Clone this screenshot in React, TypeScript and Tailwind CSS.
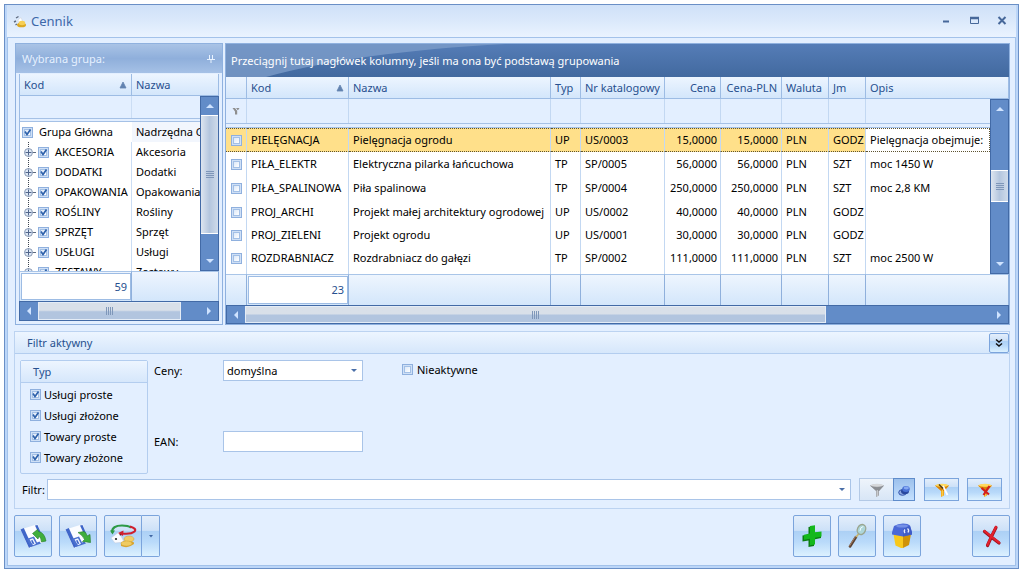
import { type ReactNode } from 'react';

const groups = [
  { kod: 'AKCESORIA', nazwa: 'Akcesoria' },
  { kod: 'DODATKI', nazwa: 'Dodatki' },
  { kod: 'OPAKOWANIA', nazwa: 'Opakowania' },
  { kod: 'ROŚLINY', nazwa: 'Rośliny' },
  { kod: 'SPRZĘT', nazwa: 'Sprzęt' },
  { kod: 'USŁUGI', nazwa: 'Usługi' },
  { kod: 'ZESTAWY', nazwa: 'Zestawy' },
];

const items = [
  { kod: 'PIELĘGNACJA', nazwa: 'Pielęgnacja ogrodu', typ: 'UP', nr: 'US/0003', cena: '15,0000', jm: 'GODZ', opis: 'Pielęgnacja obejmuje:' },
  { kod: 'PIŁA_ELEKTR', nazwa: 'Elektryczna pilarka łańcuchowa', typ: 'TP', nr: 'SP/0005', cena: '56,0000', jm: 'SZT', opis: 'moc 1450 W' },
  { kod: 'PIŁA_SPALINOWA', nazwa: 'Piła spalinowa', typ: 'TP', nr: 'SP/0004', cena: '250,0000', jm: 'SZT', opis: 'moc 2,8 KM' },
  { kod: 'PROJ_ARCHI', nazwa: 'Projekt małej architektury ogrodowej', typ: 'UP', nr: 'US/0002', cena: '40,0000', jm: 'GODZ', opis: '' },
  { kod: 'PROJ_ZIELENI', nazwa: 'Projekt ogrodu', typ: 'UP', nr: 'US/0001', cena: '30,0000', jm: 'GODZ', opis: '' },
  { kod: 'ROZDRABNIACZ', nazwa: 'Rozdrabniacz do gałęzi', typ: 'TP', nr: 'SP/0002', cena: '111,0000', jm: 'SZT', opis: 'moc 2500 W' },
];

const typy = ['Usługi proste', 'Usługi złożone', 'Towary proste', 'Towary złożone'];

function Check({ id, checked = false, label }: { id?: string; checked?: boolean; label?: string }) {
  return (
    <span className="relative inline-block size-[11px] shrink-0 align-middle">
      <input
        id={id}
        type="checkbox"
        defaultChecked={checked}
        aria-label={label}
        className="peer block size-[11px] appearance-none border border-[#8fb0de] bg-[#cfe0f6]"
      />
      <span className="pointer-events-none absolute inset-[2px] border border-[#a3c0e6] bg-gradient-to-br from-[#dce8f8] to-white" />
      <svg viewBox="0 0 11 11" className="pointer-events-none absolute inset-0 hidden size-[11px] peer-checked:block">
        <path d="M3 4.5 L5 7.5 L8.5 2.5" fill="none" stroke="#2f62ab" strokeWidth="1.7" />
      </svg>
    </span>
  );
}

function Arrow({ dir }: { dir: 'up' | 'down' | 'left' | 'right' }) {
  const points = {
    up: '1,7 9,7 5,3',
    down: '1,3 9,3 5,7',
    left: '7,1 7,9 3,5',
    right: '3,1 3,9 7,5',
  };
  return (
    <svg viewBox="0 0 10 10" className="size-[10px]">
      <polygon points={points[dir]} fill="#cfe3ff" />
    </svg>
  );
}

function Grip({ vertical = false }: { vertical?: boolean }) {
  return (
    <span className={vertical ? 'flex flex-col gap-px' : 'flex gap-px'}>
      {[0, 1, 2, 3].map(i => (
        <span key={i} className={vertical ? 'h-px w-2 bg-[#7f97b9]' : 'h-2 w-px bg-[#7f97b9]'} />
      ))}
    </span>
  );
}

function VScroll({ className, before, thumb }: { className: string; before: string; thumb: string }) {
  return (
    <div className={`flex flex-col border border-[#426aa6] bg-[#628cc8] ${className}`}>
      <button type="button" aria-label="W górę" className="flex h-[18px] shrink-0 items-center justify-center">
        <Arrow dir="up" />
      </button>
      <div className={before} />
      <div className={`flex shrink-0 items-center justify-center border-y border-white bg-gradient-to-r from-[#dde5ef] via-[#b4c6de] to-[#cfdbea] ${thumb}`}>
        <Grip vertical />
      </div>
      <div className="flex-1" />
      <button type="button" aria-label="W dół" className="flex h-[18px] shrink-0 items-center justify-center">
        <Arrow dir="down" />
      </button>
    </div>
  );
}

function HScroll({ className, thumb }: { className: string; thumb: string }) {
  return (
    <div className={`flex border border-[#426aa6] bg-[#628cc8] ${className}`}>
      <button type="button" aria-label="W lewo" className="flex w-[18px] shrink-0 items-center justify-center">
        <Arrow dir="left" />
      </button>
      <div className="flex flex-1">
        <div className={`flex items-center justify-center border border-[#e4ecf6] bg-gradient-to-b from-[#d9e0e9] from-45% to-[#b2c5df] to-55% ${thumb}`}>
          <Grip />
        </div>
      </div>
      <button type="button" aria-label="W prawo" className="flex w-[18px] shrink-0 items-center justify-center">
        <Arrow dir="right" />
      </button>
    </div>
  );
}

function SortMark() {
  return (
    <svg viewBox="0 0 8 8" className="size-2">
      <polygon points="1,7 7,7 4,1" fill="#6283b0" stroke="#6283b0" strokeWidth="0.8" />
    </svg>
  );
}

function TreeNode() {
  return (
    <svg viewBox="0 0 16 20" className="h-5 w-4 shrink-0" fill="none">
      <path d="M8.5 0V20" stroke="#3c4450" strokeDasharray="1 1" />
      <path d="M12 10.5H16" stroke="#5c6a80" />
      <circle cx="8.5" cy="10.5" r="4" fill="#dfe9f6" stroke="#8a9ab5" />
      <path d="M5.5 10.5H11.5M8.5 7.5V13.5" stroke="#50658a" />
    </svg>
  );
}

const th = 'border-r border-b border-[#9dbce4] border-r-[#9dbce4] bg-gradient-to-b from-[#edf5ff] to-[#d3e6fb] px-1 font-normal text-[#27508f]';
const tf = 'border-r border-[#8fb0dc] border-t border-t-[#a9c5e8] bg-gradient-to-b from-[#eef5fe] to-[#d3e6fb] p-0';

function GroupPanel() {
  return (
    <section className="ml-px w-[208px] shrink-0 border border-[#8fb1df] bg-[#e3efff]">
      <header className="flex h-[29px] items-center justify-between bg-gradient-to-b from-[#a9c3e6] via-[#8fafdb] to-[#a6c1e6] px-[6px] text-[#e6f1ff]">
        <h2>Wybrana grupa:</h2>
        <button type="button" aria-label="Przypnij">
          <svg viewBox="0 0 10 12" className="h-3 w-[10px]" fill="none" stroke="#e9f3ff">
            <path d="M3.5 2V6M6.5 2V6M1 6.5H9M5 7V10" />
          </svg>
        </button>
      </header>
      <div className="px-[3px] pt-px pb-[3px]">
        <table className="w-full table-fixed border-separate border-spacing-0 border-l border-[#9dbce4]">
          <colgroup>
            <col className="w-[112px]" />
            <col />
            <col className="w-[19px]" />
          </colgroup>
          <thead>
            <tr className="h-[22px] text-left">
              <th className={th}>
                <span className="flex items-center justify-between">Kod <SortMark /></span>
              </th>
              <th className={th} colSpan={2}>Nazwa</th>
            </tr>
          </thead>
          <tbody className="bg-white">
            <tr className="h-[22px]">
              <td className="border-r border-[#cbddf4] bg-[#e3efff]" />
              <td className="bg-[#e3efff]" />
              <td rowSpan={10} className="p-0 align-top">
                <VScroll className="h-[175px]" before="" thumb="h-[119px]" />
              </td>
            </tr>
            <tr className="h-1">
              <td colSpan={2} className="border-y border-[#a5c1e6] bg-[#e3efff] p-0" />
            </tr>
            <tr className="h-5">
              <td className="p-0">
                <span className="flex items-center gap-[6px] pl-[2px]">
                  <Check id="g-main" checked />
                  <label htmlFor="g-main">Grupa Główna</label>
                </span>
              </td>
              <td className="overflow-hidden bg-[#f2f6fd] p-0 pl-1 whitespace-nowrap">Nadrzędna G</td>
            </tr>
            {groups.map((g, i) => (
              <tr key={g.kod}>
                <td className="border-r border-[#cbddf4] p-0">
                  <span className={`flex items-start overflow-hidden ${i === 6 ? 'h-[9px]' : 'h-5'}`}>
                    <TreeNode />
                    <span className="flex h-5 shrink-0 items-center gap-[6px] pl-[2px]">
                      <Check id={g.kod} checked />
                      <label htmlFor={g.kod}>{g.kod}</label>
                    </span>
                  </span>
                </td>
                <td className="p-0">
                  <span className={`block overflow-hidden pl-1 leading-5 whitespace-nowrap ${i === 6 ? 'h-[9px]' : 'h-5'}`}>{g.nazwa}</span>
                </td>
              </tr>
            ))}
          </tbody>
          <tfoot>
            <tr className="h-[30px]">
              <td className={tf}>
                <div className="ml-px flex h-[27px] items-center justify-end border border-[#9dbce4] bg-white px-[3px] text-[#27508f]">59</div>
              </td>
              <td className={tf} colSpan={2} />
            </tr>
          </tfoot>
        </table>
        <HScroll className="h-5" thumb="w-[88%]" />
      </div>
    </section>
  );
}

function ItemGrid() {
  const line = 'border-r border-[#c3d8f2]';
  return (
    <section className="min-w-0 flex-1 border border-[#8fb1df]">
      <div className="relative flex h-[33px] items-center bg-gradient-to-b from-[#557db7] to-[#42699f] px-[5px] text-white">
        <svg viewBox="0 0 280 33" className="absolute top-0 left-0 h-[33px] w-[280px]">
          <path d="M0 0H280Q130 8 40 33H0Z" fill="#7f9fcb" opacity="0.75" />
        </svg>
        <span className="relative">Przeciągnij tutaj nagłówek kolumny, jeśli ma ona być podstawą grupowania</span>
      </div>
      <table className="w-full table-fixed border-separate border-spacing-0 whitespace-nowrap">
        <colgroup>
          <col className="w-[21px]" />
          <col className="w-[102px]" />
          <col className="w-[202px]" />
          <col className="w-[30px]" />
          <col className="w-[84px]" />
          <col className="w-[56px]" />
          <col className="w-[61px]" />
          <col className="w-[47px]" />
          <col className="w-[37px]" />
          <col />
          <col className="w-[19px]" />
        </colgroup>
        <thead>
          <tr className="h-[22px] text-left">
            <th className={th} />
            <th className={th}>
              <span className="flex items-center justify-between">Kod <SortMark /></span>
            </th>
            <th className={th}>Nazwa</th>
            <th className={th}>Typ</th>
            <th className={th}>Nr katalogowy</th>
            <th className={`${th} text-right`}>Cena</th>
            <th className={`${th} text-right`}>Cena-PLN</th>
            <th className={th}>Waluta</th>
            <th className={th}>Jm</th>
            <th className={th} colSpan={2}>Opis</th>
          </tr>
        </thead>
        <tbody className="bg-white">
          <tr className="h-6 bg-[#e3efff]">
            <td className={`${line} p-0`}>
              <svg viewBox="0 0 10 10" className="mx-auto size-[10px]">
                <path d="M1.5 2H8.5L6.2 5.5V8.5H4V5.5Z" fill="#8f8f8f" />
                <path d="M4.5 2L7.5 6" stroke="#e3efff" />
              </svg>
            </td>
            {[0, 1, 2, 3, 4, 5, 6, 7].map(i => <td key={i} className={line} />)}
            <td />
            <td rowSpan={9} className="p-0 align-top">
              <VScroll className="h-[175px]" before="h-[52px]" thumb="h-8" />
            </td>
          </tr>
          <tr className="h-[5px]">
            <td colSpan={10} className="border-y border-[#a5c1e6] bg-[#e3efff] p-0" />
          </tr>
          {items.map((it, i) => {
            const sel = i === 0 ? 'border-y border-y-[#5d5330] [border-top-style:dotted] [border-bottom-style:dotted] bg-[#ffe08a]' : '';
            const cell = `${line} p-0 px-1 ${sel}`;
            return (
              <tr key={it.kod} className={i < 3 ? 'h-6' : 'h-[23px]'}>
                <td className={`${line} p-0 text-center leading-none ${sel}`}><Check label={it.kod} /></td>
                <td className={cell}>{it.kod}</td>
                <td className={cell}>{it.nazwa}</td>
                <td className={cell}>{it.typ}</td>
                <td className={cell}>{it.nr}</td>
                <td className={`${cell} pr-[3px] text-right`}>{it.cena}</td>
                <td className={`${cell} pr-[3px] text-right`}>{it.cena}</td>
                <td className={cell}>PLN</td>
                <td className={cell}>{it.jm}</td>
                <td className={i === 0 ? 'border border-l-0 border-dotted border-[#5d5330] p-0 px-1' : 'p-0 px-1'}>{it.opis}</td>
              </tr>
            );
          })}
          <tr className="h-[5px]">
            {[0, 1, 2, 3, 4, 5, 6, 7, 8].map(i => <td key={i} className={`${line} p-0`} />)}
            <td className="p-0" />
          </tr>
        </tbody>
        <tfoot>
          <tr className="h-[31px]">
            <td className={tf} />
            <td className={tf}>
              <div className="ml-px flex h-[28px] items-center justify-end border border-[#9dbce4] bg-white px-[3px] text-[#27508f]">23</div>
            </td>
            {[0, 1, 2, 3, 4, 5, 6].map(i => <td key={i} className={tf} />)}
            <td className={tf} colSpan={2} />
          </tr>
        </tfoot>
      </table>
      <HScroll className="h-[19px]" thumb="w-[78%]" />
    </section>
  );
}

const btn = 'flex items-center justify-center border border-[#7ba4dc] bg-linear-[to_bottom,#e3eefb_0%,#cde1f8_36%,#acd0f5_38%,#b9dafa_65%,#dcf1ff_100%]';

function Funnel({ gray = false, children }: { gray?: boolean; children?: ReactNode }) {
  return (
    <svg viewBox="0 0 20 18" className="h-[18px] w-5">
      <path d="M3 4.5Q10 1.5 17 4.5L12 10V14.5L9 16V10Z" fill={gray ? '#a3a5a9' : '#f0a81c'} />
      <path d="M3 4.5Q10 8 17 4.5L12 10L9.5 10Z" fill={gray ? '#8b8e93' : '#d98208'} />
      <ellipse cx="10" cy="4.3" rx="6.2" ry="1.5" fill={gray ? '#d6d8db' : '#ffd95e'} />
      <path d="M10.3 9V15" stroke={gray ? '#d0d2d5' : '#ffd34d'} />
      {children}
    </svg>
  );
}

function Disk({ down = false }: { down?: boolean }) {
  return (
    <svg viewBox="0 0 28 28" className="size-7">
      <path d="M1.5 7.5L16 3L19 2.5L24.5 20L13 24.5L10 26.5Z" fill="#fbfcff" />
      <path d="M1.5 7.5L4.8 6L13 24L10 26Z" fill="#3f66c9" />
      <path d="M16 3.5L18.5 3L22 11L19.5 11Z" fill="#3f66c9" />
      <path d="M7.5 17L15 14.5L18 20.5L20.5 19.5L22 21.5L12 25Z" fill="#4a70cf" />
      <path d="M10.5 17.5L14 16.3L17 21.8L14 23.2Z" fill="#eef3ff" />
      <path d="M12 18.5L13.5 18L15.3 21.5L13.8 22.2Z" fill="#3f66c9" />
      {down ? (
        <path d="M14 10.5L20 9.5Q22.5 10.5 23 14L26 12.5L26.5 20.5L18.5 19.5L20.5 17.5Q19 13.5 14 10.5Z" fill="#3fae3c" stroke="#237a29" strokeWidth="0.6" />
      ) : (
        <path d="M13.5 11.5L18.5 7.5L19.5 9.5Q25.5 10.5 27 19L22.5 20Q22 16 20 14L19 17Z" fill="#3fae3c" stroke="#237a29" strokeWidth="0.6" />
      )}
    </svg>
  );
}

function Refresh() {
  return (
    <svg viewBox="0 0 28 28" className="size-7">
      <path d="M2 16L10 10L15 20L6 21Z" fill="#fbfcff" stroke="#c3cbdd" strokeWidth="0.5" />
      <circle cx="7" cy="17" r="1.1" fill="#222" />
      <circle cx="11.5" cy="12.5" r="1" fill="#222" />
      <path d="M12 21Q18 16 25 20.5V22Q19 27 12 24Z" fill="#d9a632" />
      <ellipse cx="20" cy="17" rx="5" ry="3" fill="#f0cd66" stroke="#d0a030" strokeWidth="0.5" />
      <ellipse cx="17.5" cy="21.5" rx="5.5" ry="2.6" fill="#efcb62" stroke="#d0a030" strokeWidth="0.5" />
      <path d="M3 10.5Q3 3.5 13 3.5Q19 3.5 22 5.5" fill="none" stroke="#2d9a45" strokeWidth="2.2" />
      <path d="M1 8.5L6 8.5L3.5 12.5Z" fill="#2d9a45" />
      <path d="M21 4.5Q28 6.5 25.5 9.5Q22 12.5 13 11.5" fill="none" stroke="#cf1f2d" strokeWidth="2.2" />
      <path d="M14.5 8.5L9 11L14 14Z" fill="#cf1f2d" />
    </svg>
  );
}

function Cross() {
  return (
    <svg viewBox="0 0 24 24" className="size-6" fill="none" strokeLinecap="round">
      <path d="M5.5 7.5Q12 13 20 19M17 3.5Q13 11 8.5 21.5" stroke="#9a101b" strokeWidth="3.2" />
      <path d="M5.5 7Q12 12.5 20 18.5M17 3Q13 10.5 8.5 21" stroke="#e3212e" strokeWidth="2.2" />
    </svg>
  );
}

function FilterPanel() {
  return (
    <section className="mt-[6px] border border-[#bcd3f1]">
      <header className="flex h-[22px] items-center justify-between border-b border-[#b3cdef] bg-gradient-to-b from-[#edf5ff] to-[#d6e7fb] pl-3 text-[#27508f]">
        <h2>Filtr aktywny</h2>
        <button type="button" aria-label="Zwiń" className={`${btn} h-5 w-5 rounded-xs`}>
          <svg viewBox="0 0 10 10" className="size-[10px]" fill="none" stroke="#111" strokeWidth="1.5">
            <path d="M2 1.5L5 4L8 1.5M2 5.5L5 8L8 5.5" />
          </svg>
        </button>
      </header>
      <div className="flex px-[5px] pt-[6px]">
        <fieldset className="w-32 rounded-xs border border-[#b3cdef] pb-1">
          <div className="flex h-[22px] items-center border-b border-[#b3cdef] bg-gradient-to-b from-[#edf5ff] to-[#d6e7fb] pl-3 text-[#27508f]">Typ</div>
          <div className="flex flex-col pt-px pb-px pl-[9px]">
            {typy.map(t => (
              <span key={t} className="flex h-[21px] items-center gap-[3px]">
                <Check id={t} checked />
                <label htmlFor={t}>{t}</label>
              </span>
            ))}
          </div>
        </fieldset>
        <div className="ml-[6px] grid auto-rows-min grid-cols-[69px_140px] gap-y-[50px]">
          <label htmlFor="ceny" className="leading-[21px]">Ceny:</label>
          <span className="relative block">
            <select id="ceny" defaultValue="domyślna" className="h-[21px] w-full appearance-none border border-[#a9c4e8] bg-white px-[3px]">
              <option>domyślna</option>
            </select>
            <svg viewBox="0 0 6 4" className="pointer-events-none absolute top-[9px] right-[6px] h-1 w-[6px]">
              <polygon points="0,0 6,0 3,3" fill="#4a6fa8" />
            </svg>
          </span>
          <label htmlFor="ean" className="leading-[21px]">EAN:</label>
          <input id="ean" className="h-[21px] w-full border border-[#a9c4e8] bg-white px-[3px]" />
        </div>
        <span className="ml-[39px] flex h-[19px] items-center gap-1">
          <Check id="nieaktywne" />
          <label htmlFor="nieaktywne">Nieaktywne</label>
        </span>
      </div>
      <div className="flex items-center pt-1 pr-[7px] pb-[7px] pl-[7px]">
        <label htmlFor="filtr" className="w-[25px] shrink-0">Filtr:</label>
        <div className="flex h-[21px] min-w-0 flex-1 border border-[#a9c4e8] bg-white">
          <input id="filtr" className="min-w-0 flex-1 px-1" />
          <button type="button" aria-label="Rozwiń" className="flex w-4 items-center justify-center">
            <svg viewBox="0 0 6 4" className="h-1 w-[6px]">
              <polygon points="0,0 6,0 3,3" fill="#4a6fa8" />
            </svg>
          </button>
        </div>
        <div className="ml-2 flex h-[23px]">
          <button type="button" aria-label="Filtruj" className="flex w-[34px] items-center justify-center border border-r-0 border-[#b3c9e6] bg-gradient-to-b from-[#eef4fb] to-[#d8e6f6]">
            <Funnel gray />
          </button>
          <button type="button" aria-label="Zablokuj filtr" className="flex w-[22px] items-center justify-center border border-[#5f8ccb] bg-gradient-to-b from-[#9cc0ec] to-[#c4e0ff]">
            <svg viewBox="0 0 14 14" className="size-[14px]">
              <ellipse cx="5.5" cy="9.5" rx="3.8" ry="2.8" fill="#8fa9e0" stroke="#3355ad" />
              <ellipse cx="8" cy="8.2" rx="4" ry="3" fill="#28479f" />
              <ellipse cx="9" cy="6" rx="3.8" ry="3" fill="#4a72d6" />
              <ellipse cx="9.3" cy="5" rx="2.6" ry="1.4" fill="#86a9f2" />
            </svg>
          </button>
        </div>
        <button type="button" aria-label="Edytuj filtr" className={`${btn} ml-[9px] h-[23px] w-[35px]`}>
          <Funnel>
            <path d="M11 5L15.5 14" stroke="#fff" strokeWidth="1.8" />
            <path d="M7 3.5L11 7.5" stroke="#4a3a1a" strokeWidth="1.4" />
          </Funnel>
        </button>
        <button type="button" aria-label="Usuń filtr" className={`${btn} ml-2 h-[23px] w-[35px]`}>
          <Funnel>
            <path d="M6.5 7L14 13.5M14.5 5L8.5 14" stroke="#d11e1e" strokeWidth="2.2" />
          </Funnel>
        </button>
      </div>
    </section>
  );
}

function Toolbar() {
  const big = `${btn} h-[42px] w-[38px] rounded-xs`;
  return (
    <footer className="mt-[6px] flex">
      <button type="button" aria-label="Zapisz układ" className={big}><Disk /></button>
      <button type="button" aria-label="Wczytaj układ" className={`${big} ml-[7px]`}><Disk down /></button>
      <button type="button" aria-label="Przelicz" className={`${big} ml-[7px] rounded-r-none`}><Refresh /></button>
      <button type="button" aria-label="Więcej" className={`${btn} h-[42px] w-[18px] rounded-r-xs border-l-0`}>
        <svg viewBox="0 0 4 3" className="h-[3px] w-1"><polygon points="0,0 4,0 2,2.5" fill="#3f66a3" /></svg>
      </button>
      <div className="flex-1" />
      <button type="button" aria-label="Dodaj" className={big}>
        <svg viewBox="0 0 24 24" className="size-6">
          <path d="M8.5 3L14 2V9L21 8V14L14 15.5V22L8.5 23V16.5L2.5 17.5V11.5L8.5 10.5Z" fill="#0b7d12" />
          <path d="M10 2L15 1.3V8.3L21.5 7.5V12.5L15 13.8V20.5L10 21.3V14.8L4 15.8V10.8L10 9.5Z" fill="#14b81c" />
        </svg>
      </button>
      <button type="button" aria-label="Podgląd" className={`${big} ml-[7px]`}>
        <svg viewBox="0 0 26 28" className="h-7 w-[26px]" fill="none" strokeLinecap="round">
          <path d="M12 15L6 24.5" stroke="#5b4233" strokeWidth="2.6" />
          <path d="M11.5 14.5L5.5 24" stroke="#a98263" />
          <path d="M14.5 12L12.5 14.5" stroke="#c9b46b" strokeWidth="1.6" />
          <ellipse cx="17.5" cy="7.5" rx="4" ry="5.2" transform="rotate(25 17.5 7.5)" fill="#add6da" stroke="#9aa58f" strokeWidth="1.4" />
          <path d="M16 8.5Q16 5 19 4.5" stroke="#f2ffff" />
        </svg>
      </button>
      <button type="button" aria-label="Usuń" className={`${big} ml-[7px]`}>
        <svg viewBox="0 0 26 28" className="h-7 w-[26px]">
          <path d="M4.5 12H14V26L12 26L6.5 23.5Z" fill="#f8c81c" />
          <path d="M14 12H22L20 23L14 26Z" fill="#cf9208" />
          <path d="M3 10.5L5 4Q9 1.5 14 1.5Q19 1.5 21 3.5L23 10.5V12.5L14 14.5L3 12.5Z" fill="#4a68d6" />
          <path d="M14 7L21 4L23 10.5V12.5L14 14.5Z" fill="#3f5cc6" />
          <ellipse cx="13" cy="4" rx="6" ry="1.6" fill="#7490e6" />
          <path d="M16 7.5Q14.5 9 16 11M18.5 6.5Q20.5 8 19 10.5" fill="none" stroke="#e6ecff" strokeWidth="1.3" />
        </svg>
      </button>
      <button type="button" aria-label="Zamknij okno" className={`${big} ml-[51px]`}><Cross /></button>
    </footer>
  );
}

export default function App() {
  return (
    <main className="bg-white p-1 font-['Noto_Sans','Open_Sans',sans-serif] text-[11px] leading-4 text-black">
      <div className="border border-[#6a8fc6] bg-[#bcd6f8] px-[2px] pb-[2px]">
        <div className="flex h-8 items-center bg-gradient-to-b from-[#cfe1f8] via-[#dbe9fb] to-[#eaf3ff] pr-[6px] pl-[5px]">
          <svg viewBox="0 0 16 16" className="size-4">
            <path d="M4 5L6.5 3.5M2 9L4 8M3.5 12L5 11" stroke="#5f6b80" strokeWidth="1.4" fill="none" />
            <path d="M6 7L9 4.5L11 9L7 12Z" fill="#fff" stroke="#c9cfda" strokeWidth="0.5" />
            <ellipse cx="9.5" cy="12" rx="4.5" ry="2.3" fill="#dba823" />
            <ellipse cx="10" cy="10" rx="3.2" ry="2.2" fill="#f6cf55" />
          </svg>
          <h1 className="ml-[3px] flex-1 text-[13px] text-[#3d68a9]">Cennik</h1>
          <div className="flex gap-3 text-[#47689a]">
            <button type="button" aria-label="Minimalizuj">
              <svg viewBox="0 0 16 16" className="size-4"><path d="M5 8.5H11" stroke="currentColor" strokeWidth="2" /></svg>
            </button>
            <button type="button" aria-label="Maksymalizuj">
              <svg viewBox="0 0 16 16" className="size-4" fill="none" stroke="currentColor">
                <path d="M4.5 4.5H12.5V10.5H4.5Z" />
                <path d="M4 5H13" strokeWidth="2.5" />
              </svg>
            </button>
            <button type="button" aria-label="Zamknij">
              <svg viewBox="0 0 16 16" className="size-4"><path d="M4.5 4L11.5 11M11.5 4L4.5 11" stroke="currentColor" strokeWidth="2" /></svg>
            </button>
          </div>
        </div>
        <div className="border border-[#a3c2ea] bg-[#e3efff] pt-[5px] pr-[5px] pb-2 pl-[6px]">
          <div className="flex gap-[2px]">
            <GroupPanel />
            <ItemGrid />
          </div>
          <FilterPanel />
          <Toolbar />
        </div>
      </div>
    </main>
  );
}
